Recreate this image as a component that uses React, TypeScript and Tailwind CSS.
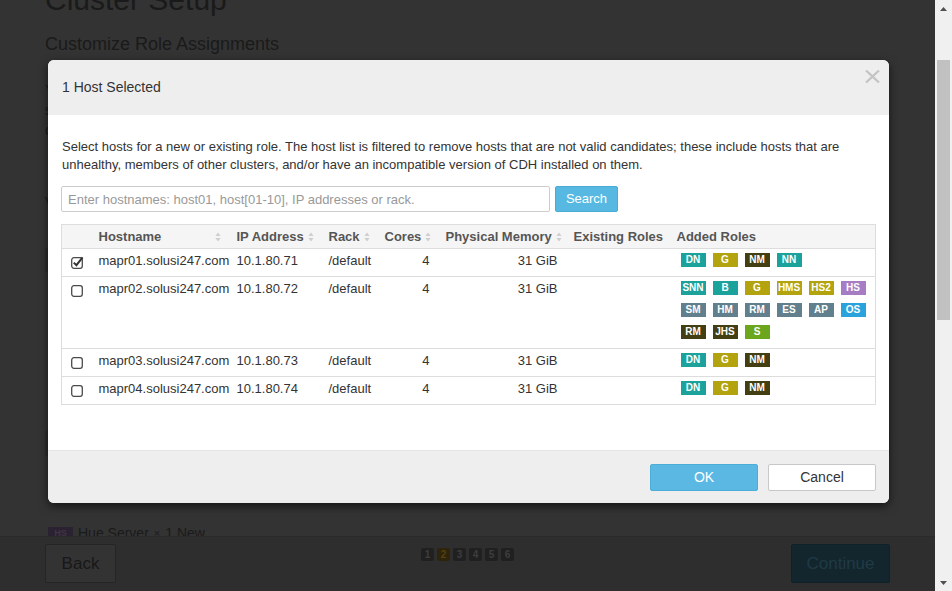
import React from 'react';

/**
 * Cluster setup — "1 Host Selected" dialog over the role assignment page.
 */

type Tone = 'teal' | 'olive' | 'dark' | 'purple' | 'slate' | 'blue' | 'green';

const toneClass: Record<Tone, string> = {
  teal: 'bg-[#1aa29b]',
  olive: 'bg-[#b3a30e]',
  dark: 'bg-[#433f12]',
  purple: 'bg-[#a67dc5]',
  slate: 'bg-[#617f8d]',
  blue: 'bg-[#2aa3dc]',
  green: 'bg-[#6ba61d]',
};

interface Host {
  name: string;
  ip: string;
  checked?: boolean;
  roles: [string, Tone][];
}

const hosts: Host[] = [
  {
    name: 'mapr01.solusi247.com',
    ip: '10.1.80.71',
    checked: true,
    roles: [['DN', 'teal'], ['G', 'olive'], ['NM', 'dark'], ['NN', 'teal']],
  },
  {
    name: 'mapr02.solusi247.com',
    ip: '10.1.80.72',
    roles: [
      ['SNN', 'teal'], ['B', 'teal'], ['G', 'olive'], ['HMS', 'olive'], ['HS2', 'olive'], ['HS', 'purple'],
      ['SM', 'slate'], ['HM', 'slate'], ['RM', 'slate'], ['ES', 'slate'], ['AP', 'slate'], ['OS', 'blue'],
      ['RM', 'dark'], ['JHS', 'dark'], ['S', 'green'],
    ],
  },
  {
    name: 'mapr03.solusi247.com',
    ip: '10.1.80.73',
    roles: [['DN', 'teal'], ['G', 'olive'], ['NM', 'dark']],
  },
  {
    name: 'mapr04.solusi247.com',
    ip: '10.1.80.74',
    roles: [['DN', 'teal'], ['G', 'olive'], ['NM', 'dark']],
  },
];

function SortIcon() {
  return (
    <svg width="6" height="10" viewBox="0 0 6 10" className="shrink-0">
      <path d="M3 0.5 L5.6 4 L0.4 4 Z" fill="#cfcfcf" />
      <path d="M0.4 6 L5.6 6 L3 9.5 Z" fill="#cfcfcf" />
    </svg>
  );
}

function Checkbox({ checked }: { checked?: boolean }) {
  return (
    <svg width="13" height="13" viewBox="0 0 13 13">
      <rect x="0.7" y="1.7" width="10.6" height="10.6" rx="2.2" fill="#fff" stroke="#4a4a4a" strokeWidth="1.3" />
      {checked && <path d="M2.8 6.6 L5.4 9.2 L11.6 1.4" fill="none" stroke="#333" strokeWidth="2" />}
    </svg>
  );
}

function Badge({ code, tone }: { code: string; tone: Tone }) {
  return (
    <span
      className={`inline-flex h-[14px] w-[25px] items-center justify-center text-[10px] font-bold leading-none text-white ${toneClass[tone]}`}
    >
      {code}
    </span>
  );
}

function Th({ label, sort = true }: { label: string; sort?: boolean }) {
  return (
    <th className="h-[24px] px-[8px] py-0 text-left align-middle font-bold text-[#555]">
      <div className="flex items-center justify-between gap-[4px]">
        <span className="whitespace-nowrap">{label}</span>
        {sort && <SortIcon />}
      </div>
    </th>
  );
}

function HostsDialog() {
  return (
    <div className="absolute left-[48px] top-[60px] flex w-[841px] flex-col overflow-hidden rounded-[6px] bg-white shadow-[0_3px_10px_rgba(0,0,0,0.6)]">
      {/* Header */}
      <div className="flex h-[55px] items-start justify-between bg-[#efeeef] pl-[14px] pr-[9px]">
        <h3 className="self-center text-[14px] text-[#333]">1 Host Selected</h3>
        <svg width="15" height="13" viewBox="0 0 15 13" className="mt-[10px]">
          <path d="M1 0.5 L14 12.5 M14 0.5 L1 12.5" stroke="#c4c4c4" strokeWidth="2.3" />
        </svg>
      </div>

      {/* Body */}
      <div className="flex h-[335px] flex-col px-[13px] pt-[23px] text-[13px] text-[#333]">
        <p className="pl-[1px] leading-[18px]">
          Select hosts for a new or existing role. The host list is filtered to remove hosts that are not valid candidates; these include hosts that are
          <br />
          unhealthy, members of other clusters, and/or have an incompatible version of CDH installed on them.
        </p>

        <div className="mt-[12px] flex gap-[5px]">
          <input
            className="h-[26px] w-[489px] rounded-[2px] border border-[#ccc] px-[6px] text-[13px] text-[#333] outline-none placeholder:text-[#999]"
            placeholder="Enter hostnames: host01, host[01-10], IP addresses or rack."
          />
          <button className="h-[26px] w-[63px] rounded-[2px] border border-[#48acd6] bg-[#57b9e2] text-[13px] text-white">
            Search
          </button>
        </div>

        <table className="mt-[12px] w-[814px] table-fixed border-collapse border border-[#ddd]">
          <colgroup>
            <col className="w-[29px]" />
            <col className="w-[138px]" />
            <col className="w-[92px]" />
            <col className="w-[56px]" />
            <col className="w-[61px]" />
            <col className="w-[128px]" />
            <col className="w-[103px]" />
            <col className="w-[207px]" />
          </colgroup>
          <thead>
            <tr className="bg-[#f5f5f5]">
              <th className="h-[24px]" />
              <Th label="Hostname" />
              <Th label="IP Address" />
              <Th label="Rack" />
              <Th label="Cores" />
              <Th label="Physical Memory" />
              <Th label="Existing Roles" sort={false} />
              <Th label="Added Roles" sort={false} />
            </tr>
          </thead>
          <tbody>
            {hosts.map((h) => (
              <tr key={h.name} className="border-t border-[#ddd] align-top leading-[18px]">
                <td className="pl-[9px] pt-[7px]">
                  <Checkbox checked={h.checked} />
                </td>
                <td className="px-[8px] pt-[3px] whitespace-nowrap">{h.name}</td>
                <td className="px-[8px] pt-[3px]">{h.ip}</td>
                <td className="px-[8px] pt-[3px]">/default</td>
                <td className="px-[8px] pt-[3px] text-right">4</td>
                <td className="px-[8px] pt-[3px] text-right">31 GiB</td>
                <td className="px-[8px] pt-[3px]" />
                <td className="pb-[9px] pl-[12px] pr-[8px] pt-[4px]">
                  <div className="flex flex-wrap gap-x-[7px] gap-y-[8px]">
                    {h.roles.map(([code, tone], i) => (
                      <Badge key={code + i} code={code} tone={tone} />
                    ))}
                  </div>
                </td>
              </tr>
            ))}
          </tbody>
        </table>
      </div>

      {/* Footer */}
      <div className="flex h-[53px] items-start justify-end gap-[10px] border-t border-[#e3e3e3] bg-[#efeeef] pr-[13px] pt-[13px]">
        <button className="h-[27px] w-[108px] rounded-[2px] border border-[#4aaed8] bg-[#5ab8e3] text-[14px] text-white">
          OK
        </button>
        <button className="h-[27px] w-[108px] rounded-[2px] border border-[#c8c8c8] bg-white text-[14px] text-[#333]">
          Cancel
        </button>
      </div>
    </div>
  );
}

function Pager() {
  const steps = ['1', '2', '3', '4', '5', '6'];
  return (
    <div className="mt-[4px] flex gap-[3px]">
      {steps.map((s) => (
        <span
          key={s}
          className={`flex h-[13px] w-[13px] items-center justify-center rounded-[2px] text-[10px] font-bold ${
            s === '2' ? 'bg-[#2e240c] text-[#54410f]' : 'bg-[#202020] text-[#3e3e3e]'
          }`}
        >
          {s}
        </span>
      ))}
    </div>
  );
}

export default function App() {
  return (
    <div className="flex h-[591px] w-[952px] overflow-hidden bg-[#333] font-['Liberation_Sans',Arial,sans-serif]">
      <div className="relative flex w-[935px] flex-col">
        {/* Page under the overlay */}
        <div className="h-[536px] shrink-0 overflow-hidden px-[45px] text-[#1a1a1a]">
          <h1 className="-mt-[18px] text-[30px] leading-[36px]">Cluster Setup</h1>
          <h2 className="mt-[14px] text-[18px] leading-[24px]">Customize Role Assignments</h2>
          <p className="mt-[24px] text-[14px] leading-[20px]">
            You can customize the role assignments for your new cluster here, but if assignments are made
            <br />
            sub-optimally, performance may suffer. We do not recommend altering assignments unless you have
            <br />
            correctly configured hosts for those specific roles.
          </p>
          <p className="mt-[52px] text-[14px] leading-[20px]">View By Host</p>
          <div className="mt-[36px] h-[24px] rounded-[3px] bg-[#2d2d2d]" />
          <div className="mt-[158px] h-[26px] rounded-[3px] bg-[#2d2d2d]" />
          <div className="ml-[3px] mt-[68px] flex items-center gap-[5px] text-[14px] leading-[18px]">
            <span className="flex h-[12px] w-[25px] items-center justify-center bg-[#2b2231] text-[9px] font-bold text-[#3f3547]">
              HS
            </span>
            <span>Hue Server</span>
            <span className="text-[11px]">×</span>
            <span>1 New</span>
          </div>
        </div>

        {/* Wizard footer bar */}
        <div className="grid h-[55px] grid-cols-[1fr_auto_1fr] items-start border-t border-[#2a2a2a] bg-[#2e2e2e] px-[45px] pt-[7px]">
          <button className="h-[39px] w-[71px] justify-self-start rounded-[2px] border border-[#252525] bg-[#333] text-[17px] text-[#181818]">
            Back
          </button>
          <Pager />
          <button className="h-[39px] w-[99px] justify-self-end rounded-[2px] border border-[#0f2028] bg-[#13262e] text-[17px] text-[#1f3a46]">
            Continue
          </button>
        </div>

        <HostsDialog />
      </div>

      {/* Scrollbar */}
      <div className="flex w-[17px] flex-col bg-[#f0f0f0]">
        <div className="flex h-[17px] items-center justify-center">
          <svg width="7" height="4" viewBox="0 0 7 4">
            <path d="M3.5 0 L7 4 L0 4 Z" fill="#505050" />
          </svg>
        </div>
        <div className="mx-[2px] mt-[43px] h-[260px] bg-[#c1c1c1]" />
        <div className="flex-1" />
        <div className="flex h-[17px] items-center justify-center">
          <svg width="7" height="4" viewBox="0 0 7 4">
            <path d="M0 0 L7 0 L3.5 4 Z" fill="#505050" />
          </svg>
        </div>
      </div>
    </div>
  );
}
